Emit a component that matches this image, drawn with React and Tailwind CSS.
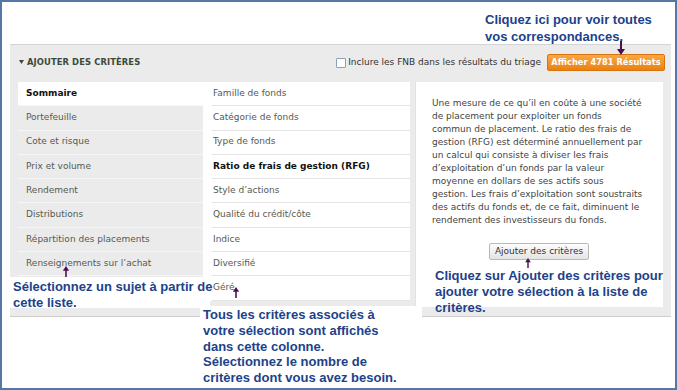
import React from "react";

const left = [
  "Sommaire",
  "Portefeuille",
  "Cote et risque",
  "Prix et volume",
  "Rendement",
  "Distributions",
  "Répartition des placements",
  "Renseignements sur l’achat",
];

const middle = [
  "Famille de fonds",
  "Catégorie de fonds",
  "Type de fonds",
  "Ratio de frais de gestion (RFG)",
  "Style d’actions",
  "Qualité du crédit/côte",
  "Indice",
  "Diversifié",
  "Géré",
];

const desc = [
  "Une mesure de ce qu’il en coûte à une société",
  "de placement pour exploiter un fonds",
  "commun de placement. Le ratio des frais de",
  "gestion (RFG) est déterminé annuellement par",
  "un calcul qui consiste à diviser les frais",
  "d’exploitation d’un fonds par la valeur",
  "moyenne en dollars de ses actifs sous",
  "gestion. Les frais d’exploitation sont soustraits",
  "des actifs du fonds et, de ce fait, diminuent le",
  "rendement des investisseurs du fonds.",
];

function Arrow({ down, className }) {
  return (
    <svg className={className} width="8" height="14" viewBox="0 0 8 14">
      {down ? (
        <>
          <rect x="3" y="0" width="2" height="9" fill="#4b0f50" />
          <polygon points="0,8 8,8 4,14" fill="#4b0f50" />
        </>
      ) : (
        <>
          <polygon points="4,0 8,6 0,6" fill="#4b0f50" />
          <rect x="3" y="5" width="2" height="9" fill="#4b0f50" />
        </>
      )}
    </svg>
  );
}

export default function App() {
  const dv = { fontFamily: '"DejaVu Sans", Verdana, sans-serif' };
  const ar = { fontFamily: '"Liberation Sans", Arial, sans-serif' };
  return (
    <div
      className="relative w-[677px] h-[390px] overflow-hidden bg-white border-2 border-[#5577a6]"
      style={dv}
    >
      {/* panel */}
      <div className="mt-[42px] ml-[8px] w-[661px] h-[273px] bg-[#ebebeb] border-t border-[#d4d4d4] border-b border-b-[#cdcdcd]">
        {/* header */}
        <div className="h-[37px] flex items-center pb-[2px]">
          <div className="flex items-center pl-[9px]">
            <svg width="5" height="4" viewBox="0 0 5 4" className="mr-[3px]">
              <polygon points="0,0 5,0 2.5,4" fill="#3b4a3b" />
            </svg>
            <span className="text-[8.4px] font-bold text-[#3b4a3b] tracking-[0.1px]">
              AJOUTER DES CRITÈRES
            </span>
          </div>
          <div className="ml-auto flex items-center pr-[6px]">
            <span className="w-[10px] h-[10px] bg-white border border-[#8a9fb8] rounded-[1px] mr-[2px]" />
            <span className="text-[9px] text-[#333]">
              Inclure les FNB dans les résultats du triage
            </span>
            <button className="ml-[6px] w-[118px] h-[17px] rounded-[2px] border border-[#d9730c] bg-gradient-to-b from-[#f8a83f] to-[#ea810f] text-white text-[8.3px] font-bold leading-none">
              Afficher 4781 Résultats
            </button>
          </div>
        </div>
        {/* columns */}
        <div className="flex items-start pl-[8px]">
          <div className="w-[185px]">
            {left.map((t, i) => (
              <div
                key={t}
                className={
                  "h-[24.3px] pl-[8px] flex items-center border-b border-[#f6f6f6] text-[9px] " +
                  (i === 0 ? "bg-white font-bold text-[#111]" : "text-[#555a52]")
                }
              >
                {t}
              </div>
            ))}
          </div>
          <div className="w-[207px] bg-white pl-[9px]">
            {middle.map((t, i) => (
              <div
                key={t}
                className={
                  "h-[24.3px] pl-[1px] flex items-center border-b border-[#e4e4e4] text-[9px] " +
                  (i === 3 ? "font-bold text-[#111]" : "text-[#555a52]")
                }
              >
                {t}
              </div>
            ))}
          </div>
          <div className="ml-[5px] w-[248px] h-[225px] bg-white border-l border-[#e2e2e2] pl-[16px] pt-[15px]">
            <div className="text-[9px] leading-[13px] text-[#444] whitespace-nowrap">
              {desc.map((l) => (
                <div key={l}>{l}</div>
              ))}
            </div>
            <div className="mt-[10px] pl-[57px]">
              <button className="w-[100px] h-[17px] rounded-[2px] border border-[#b9b9b9] bg-gradient-to-b from-[#fdfdfd] to-[#e4e4e4] text-[9px] text-[#333] leading-none">
                Ajouter des critères
              </button>
            </div>
          </div>
        </div>
      </div>

      {/* annotations */}
      <div
        className="absolute left-[483px] top-[9px] text-[13px] leading-[17px] font-bold text-[#1c428a]"
        style={ar}
      >
        <div>Cliquez ici pour voir toutes</div>
        <div>vos correspondances.</div>
      </div>
      <Arrow down className="absolute left-[615px] top-[39px]" />

      <div
        className="absolute left-[8px] top-[275px] w-[200px] h-[31px] bg-white pl-[3px] pt-[2px] text-[13px] leading-[16px] font-bold text-[#1c428a] whitespace-nowrap"
        style={ar}
      >
        <div>Sélectionnez un sujet à partir de</div>
        <div>cette liste.</div>
      </div>
      <Arrow className="absolute left-[60px] top-[264px] h-[11px]" />

      <div
        className="absolute left-[198px] top-[304px] w-[222px] h-[90px] bg-white pl-[3px] pt-[1px] text-[13px] leading-[15.8px] font-bold text-[#1c428a] whitespace-nowrap"
        style={ar}
      >
        <div>Tous les critères associés à</div>
        <div>votre sélection sont affichés</div>
        <div>dans cette colonne.</div>
        <div>Sélectionnez le nombre de</div>
        <div>critères dont vous avez besoin.</div>
      </div>
      <Arrow className="absolute left-[230px] top-[285px] h-[11px]" />

      <div
        className="absolute left-[433px] top-[266px] text-[13px] leading-[16px] font-bold text-[#1c428a] whitespace-nowrap"
        style={ar}
      >
        <div>Cliquez sur Ajouter des critères pour</div>
        <div>ajouter votre sélection à la liste de</div>
        <div>critères.</div>
      </div>
      <Arrow className="absolute left-[522px] top-[256px] h-[10px]" />
    </div>
  );
}
